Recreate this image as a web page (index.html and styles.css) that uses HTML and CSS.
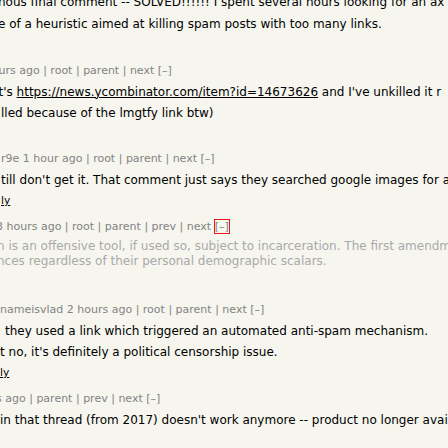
FILE: index.html
```html
<!DOCTYPE html>
<html lang="en">
<head>
<meta charset="utf-8">
<title>Hacker News thread</title>
<link rel="stylesheet" href="styles.css">
</head>
<body>
<div class="thread">
  <div class="comment ca">
    <div class="commtext">
      <p class="l0">nous final comment -- SOLVED!!!!!! I spent several hours looking for an ax</p>
      <p class="l1">e of a heuristic aimed at killing spam posts with too many links.</p>
    </div>
    <div class="reply"></div>
  </div>

  <div class="comment cb">
    <div class="comhead">urs ago | root | parent | next [–]</div>
    <div class="commtext">
      <p>t's <a href="#">https://news.ycombinator.com/item?id=14673626</a> and I've unkilled it r</p>
      <p class="shift">lled because of the lmgtfy link btw)</p>
    </div>
    <div class="reply"></div>
  </div>

  <div class="comment cc">
    <div class="comhead">r9e 1 hour ago | root | parent | next [–]</div>
    <div class="commtext">
      <p>till don't get it. That comment just says they searched google images for a</p>
    </div>
    <div class="reply"><a href="#">ly</a></div>
  </div>

  <div class="comment cd">
    <div class="comhead">3 hours ago | root | parent | prev | next <a href="#" class="togg focused">[–]</a></div>
    <div class="commtext dead">
      <p class="w1">n is an offensive tool, if used so, subject to incarceration. The first amendm</p>
      <p class="w2">nces regardless of their personal demographic scalars.</p>
    </div>
    <div class="reply"></div>
  </div>

  <div class="comment ce">
    <div class="comhead">nameisvlad 2 hours ago | root | parent | next [–]</div>
    <div class="commtext">
      <p class="inset">they used a link which triggered an automated anti-spam mechanism.</p>
      <p>t no, it's definitely a political censorship issue.</p>
    </div>
    <div class="reply"><a href="#">ly</a></div>
  </div>

  <div class="comment cf">
    <div class="comhead">s ago | parent | prev | next [–]</div>
    <div class="commtext">
      <p>in that thread (from 2017) doesn't work anymore -- product no longer available</p>
    </div>
  </div>
</div>
</body>
</html>
```

FILE: styles.css
```css
html, body {
  margin: 0;
  padding: 0;
}

body {
  width: 448px;
  height: 448px;
  overflow: hidden;
  background: #f6f6ef;
  color: #000;
  font-family: "DejaVu Sans", Verdana, sans-serif;
}

.thread {
  margin-top: -5px;
}

.l0 {
  margin-bottom: 8px !important;
}

.comhead {
  font-size: 11px;
  line-height: 12px;
  height: 12px;
  color: #828282;
  white-space: nowrap;
  margin-bottom: 8px;
}

.comhead a {
  color: #828282;
  text-decoration: none;
}

.togg.focused {
  outline: 1px solid #e8151b;
  outline-offset: 0;
}

.commtext p {
  margin: 0 0 7px;
  font-size: 12px;
  line-height: 14px;
  white-space: nowrap;
}

.commtext p:last-child {
  margin-bottom: 0;
}

.commtext a {
  color: #000;
  text-decoration: underline;
}

.dead {
  margin-top: -2px;
}

.dead .w1,
.dead .w2 {
  color: #a9a9a9;
  line-height: 15px;
  margin: 0;
}

.reply {
  font-size: 10.67px;
  line-height: 12px;
  height: 12px;
  margin-top: 8px;
  margin-bottom: 13.5px;
}

.cd .reply {
  margin-top: 10px;
}

.reply a {
  color: #000;
  text-decoration: underline;
}

/* horizontal offsets of the clipped left edge */
.ca { margin-left: -2px; }
.cb { margin-left: -1.5px; }
.cb .shift { margin-left: 2.5px; }
.cc { margin-left: 1px; }
.cd { margin-left: -4px; }
.cd .commtext { margin-left: 1px; }
.ce { margin-left: 0; }
.ce .inset { margin-left: 5px; }
.cf { margin-left: -4px; }
.cf .commtext { margin-left: 4px; }
```
